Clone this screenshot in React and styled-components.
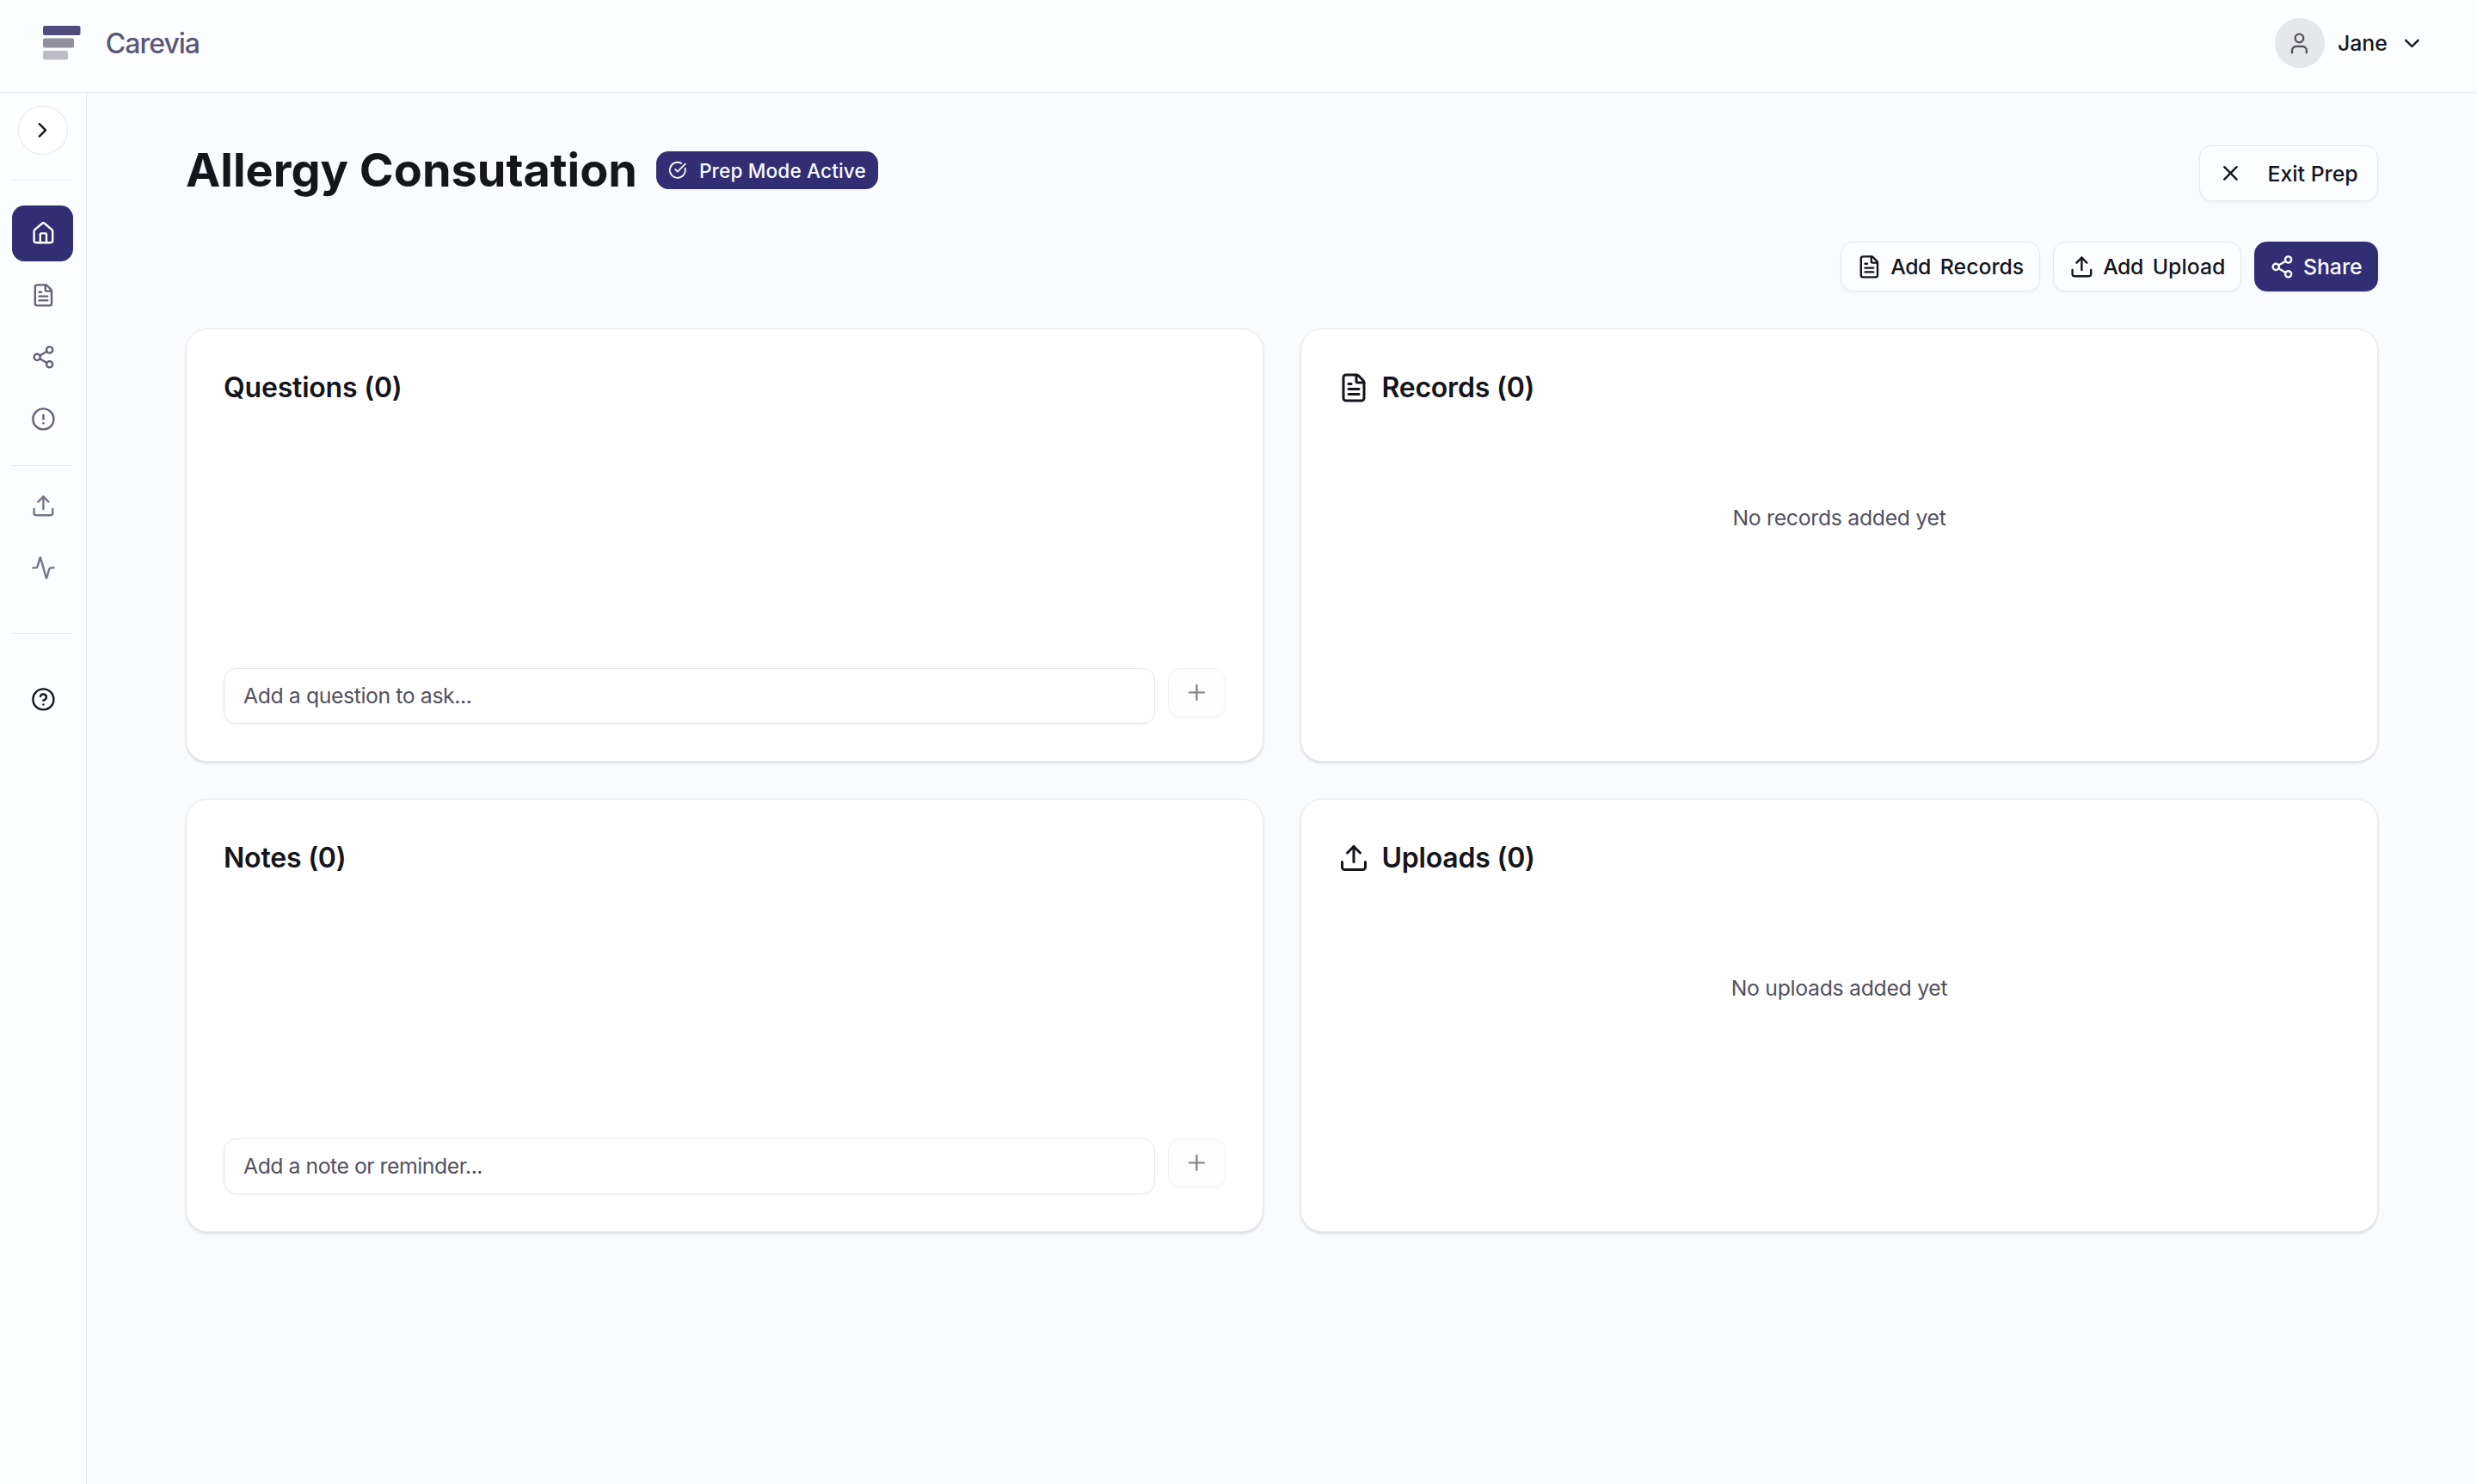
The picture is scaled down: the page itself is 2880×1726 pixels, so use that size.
import React from "react";
import styled, { createGlobalStyle } from "styled-components";
import {
  Activity,
  ChevronDown,
  ChevronRight,
  CircleAlert,
  CircleCheckBig,
  CircleQuestionMark,
  FileText,
  House,
  Plus,
  Share2,
  Upload,
  User,
  X,
} from "lucide-react";

const ICON = 28.8;

const mainLinks = [
  { name: "home", Icon: House, active: true },
  { name: "records", Icon: FileText },
  { name: "share", Icon: Share2 },
  { name: "alerts", Icon: CircleAlert },
];

const toolLinks = [
  { name: "upload", Icon: Upload },
  { name: "activity", Icon: Activity },
];

const Logo = () => (
  <svg width="44" height="40" viewBox="0 0 44 40">
    <rect x="0" y="0" width="43.5" height="11" rx="2" fill="#504b7c" />
    <rect x="0" y="14.4" width="36" height="11" rx="2" fill="#92909f" />
    <rect x="0" y="29" width="29" height="10.6" rx="2" fill="#bebdc7" />
  </svg>
);

const NavGroup = ({ links, soft }) => (
  <NavList>
    {links.map(({ name, Icon, active }) => (
      <NavItem key={name} $active={active} $soft={soft} aria-label={name}>
        <Icon size={ICON} />
      </NavItem>
    ))}
  </NavList>
);

const EntryCard = ({ title, placeholder, track }) => (
  <Card>
    <CardHeader>
      <CardTitle>{title}</CardTitle>
    </CardHeader>
    <EntryRow>
      <EntryInput placeholder={placeholder} $track={track} />
      <AddButton aria-label="add">
        <Plus size={ICON} />
      </AddButton>
    </EntryRow>
  </Card>
);

const ListCard = ({ title, Icon, empty }) => (
  <Card>
    <CardHeader>
      <Icon size={36} />
      <CardTitle>{title}</CardTitle>
    </CardHeader>
    <EmptyText>{empty}</EmptyText>
  </Card>
);

const App = () => {
  return (
    <Page>
      <GlobalStyle />
      <Header>
        <Brand>
          <Logo />
          <BrandName>Carevia</BrandName>
        </Brand>
        <Account>
          <Avatar>
            <User size={ICON} />
          </Avatar>
          <span>Jane</span>
          <ChevronDown size={ICON} />
        </Account>
      </Header>

      <Body>
        <Sidebar>
          <ExpandButton aria-label="expand">
            <ChevronRight size={ICON} />
          </ExpandButton>
          <Divider $top={29} $bottom={29} />
          <NavGroup links={mainLinks} />
          <Divider $top={21} $bottom={14} />
          <NavGroup links={toolLinks} soft />
          <Divider $top={43} $bottom={44} />
          <NavItem $help aria-label="help">
            <CircleQuestionMark size={ICON} />
          </NavItem>
        </Sidebar>

        <Main>
          <TitleRow>
            <TitleGroup>
              <Title>Allergy Consutation</Title>
              <Badge>
                <CircleCheckBig size={21.6} />
                Prep Mode Active
              </Badge>
            </TitleGroup>
            <ExitButton>
              <X size={ICON} />
              Exit Prep
            </ExitButton>
          </TitleRow>

          <Actions>
            <ActionButton>
              <FileText size={ICON} />
              <ActionLabel>
                <ActionVerb>Add</ActionVerb>
                <span>Records</span>
              </ActionLabel>
            </ActionButton>
            <ActionButton>
              <Upload size={ICON} />
              <ActionLabel>
                <ActionVerb>Add</ActionVerb>
                <span>Upload</span>
              </ActionLabel>
            </ActionButton>
            <ActionButton $primary>
              <Share2 size={ICON} />
              Share
            </ActionButton>
          </Actions>

          <Grid>
            <EntryCard
              title="Questions (0)"
              placeholder="Add a question to ask..."
              track="-0.4px"
            />
            <ListCard
              title="Records (0)"
              Icon={FileText}
              empty="No records added yet"
            />
            <EntryCard
              title="Notes (0)"
              placeholder="Add a note or reminder..."
              track="-0.48px"
            />
            <ListCard
              title="Uploads (0)"
              Icon={Upload}
              empty="No uploads added yet"
            />
          </Grid>
        </Main>
      </Body>
    </Page>
  );
};

export default App;

const GlobalStyle = createGlobalStyle`
  * {
    box-sizing: border-box;
  }
  body {
    margin: 0;
    background: #fafbfd;
    color: #15151c;
    font-family: Inter, "Liberation Sans", sans-serif;
    font-size: 24.8px;
  }
  button, input {
    margin: 0;
    font: inherit;
    color: inherit;
  }
  svg {
    flex: none;
  }
`;

const Page = styled.div`
  display: flex;
  flex-direction: column;
  height: 100vh;
  overflow: hidden;
`;

const Header = styled.header`
  flex: none;
  display: flex;
  align-items: center;
  justify-content: space-between;
  height: 108px;
  padding: 0 61px 7px 50px;
  background: #fcfdfe;
  border-bottom: 1px solid #e5e7eb;
`;

const Brand = styled.div`
  display: flex;
  align-items: center;
  gap: 28.8px;
`;

const BrandName = styled.span`
  font-size: 32px;
  font-weight: 500;
  letter-spacing: -1px;
  color: #5b5776;
`;

const Account = styled.div`
  display: flex;
  align-items: center;
  gap: 14.4px;
  font-weight: 500;
`;

const Avatar = styled.div`
  display: flex;
  align-items: center;
  justify-content: center;
  width: 57.6px;
  height: 57.6px;
  margin-right: 1px;
  border-radius: 50%;
  background: #e6e7ea;
  color: #55545f;
`;

const Body = styled.div`
  flex: 1;
  display: flex;
  min-height: 0;
`;

const Sidebar = styled.aside`
  flex: none;
  display: flex;
  flex-direction: column;
  width: 101px;
  padding: 15px 15px 0 14px;
  background: #fcfdfe;
  border-right: 1px solid #e5e7eb;
`;

const ExpandButton = styled.button`
  align-self: center;
  display: flex;
  align-items: center;
  justify-content: center;
  width: 58px;
  height: 57px;
  padding: 0;
  border: 1px solid #e5e7eb;
  border-radius: 50%;
  background: #ffffff;
`;

const Divider = styled.div`
  height: 1px;
  margin: ${({ $top, $bottom }) => `${$top}px 0 ${$bottom}px`};
  background: #e5e7eb;
`;

const NavList = styled.nav`
  display: flex;
  flex-direction: column;
  gap: 7.2px;
`;

const navColor = ({ $active, $soft, $help }) => {
  if ($active) return "#ffffff";
  if ($help) return "#15151c";
  return $soft ? "#77748a" : "#656279";
};

const NavItem = styled.a`
  display: flex;
  align-items: center;
  justify-content: center;
  height: 64.8px;
  padding-left: 1px;
  border-radius: 14.4px;
  background: ${({ $active }) => ($active ? "#322e74" : "transparent")};
  color: ${navColor};
`;

const Main = styled.main`
  flex: 1;
  padding: 61px 115px 0;
`;

const TitleRow = styled.div`
  display: flex;
  align-items: flex-start;
  justify-content: space-between;
  margin-bottom: 47px;
`;

const TitleGroup = styled.div`
  display: flex;
  align-items: center;
  gap: 21.6px;
  height: 58px;
`;

const Title = styled.h1`
  margin: 0;
  font-size: 54px;
  font-weight: 700;
  line-height: 58px;
`;

const Badge = styled.span`
  display: flex;
  align-items: center;
  gap: 14.4px;
  height: 44px;
  padding: 0 14.4px;
  border-radius: 14.4px;
  background: #322e74;
  color: #fafbfd;
  font-size: 22.6px;
  font-weight: 500;
  letter-spacing: 0.15px;
`;

const OutlineButton = styled.button`
  display: flex;
  align-items: center;
  border: 1px solid #e5e7eb;
  border-radius: 14.4px;
  background: #fcfdfe;
  box-shadow: 0 2px 3px rgba(20, 20, 40, 0.04);
  font-weight: 500;
  white-space: nowrap;
`;

const ExitButton = styled(OutlineButton)`
  gap: 28.8px;
  width: 208px;
  height: 65px;
  padding: 0 0 0 21px;
`;

const Actions = styled.div`
  display: flex;
  justify-content: flex-end;
  gap: 14.4px;
  margin-bottom: 43px;
`;

const ActionButton = styled(OutlineButton)`
  gap: 10.8px;
  height: 58px;
  padding: 0 18px;
  ${({ $primary }) =>
    $primary &&
    `
    gap: 10px;
    padding: 0 17.4px;
    border-color: #322e74;
    background: #322e74;
    color: #fafbfd;
  `}
`;

const ActionLabel = styled.span`
  display: flex;
  gap: 11px;
`;

const ActionVerb = styled.span`
  letter-spacing: -0.5px;
`;

const Grid = styled.div`
  display: grid;
  grid-template-columns: 1fr 1fr;
  grid-auto-rows: 504px;
  gap: 43px;
`;

const Card = styled.section`
  display: flex;
  flex-direction: column;
  padding: 43px;
  border: 1px solid #e5e7eb;
  border-radius: 25px;
  background: #ffffff;
  box-shadow: 0 2px 3px rgba(20, 20, 40, 0.12);
`;

const CardHeader = styled.div`
  display: flex;
  align-items: center;
  gap: 14.4px;
  height: 49px;
`;

const CardTitle = styled.h2`
  margin: 0;
  font-size: 32px;
  font-weight: 600;
  letter-spacing: -0.2px;
  line-height: 49px;
`;

const EmptyText = styled.p`
  margin: 109px 0 0;
  color: #52525e;
  letter-spacing: -0.3px;
  line-height: 36px;
  text-align: center;
`;

const EntryRow = styled.div`
  display: flex;
  align-items: flex-start;
  gap: 15px;
  margin-top: auto;
`;

const EntryInput = styled.input`
  flex: 1;
  height: 65px;
  padding: 0 22px 1px;
  border: 1px solid #e5e7eb;
  border-radius: 14.4px;
  background: #ffffff;
  box-shadow: 0 2px 3px rgba(20, 20, 40, 0.03);
  letter-spacing: ${({ $track }) => $track};
  &::placeholder {
    color: #52525e;
    opacity: 1;
  }
`;

const AddButton = styled(OutlineButton)`
  justify-content: center;
  width: 67px;
  height: 57px;
  padding: 0;
  opacity: 0.5;
`;
